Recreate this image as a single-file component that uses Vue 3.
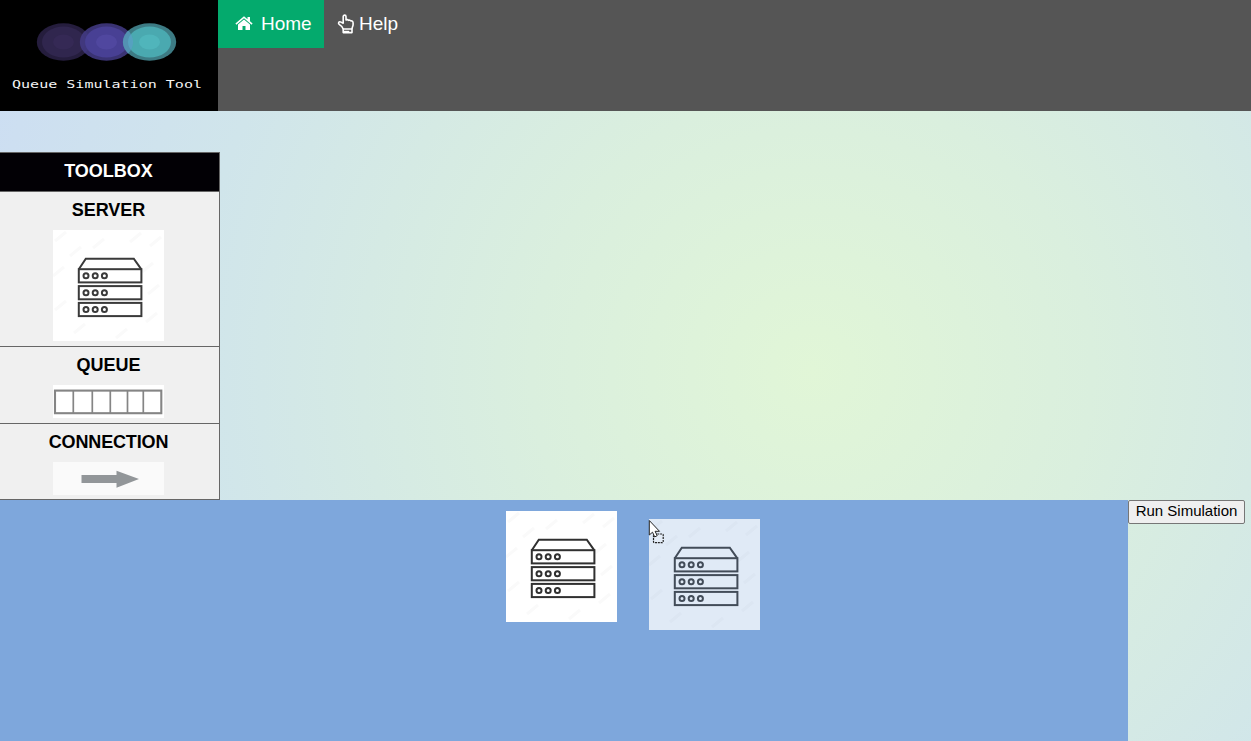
<script setup>
const units = [39.2, 56.1, 72.9]
const leds = [33, 42.2, 51.4]
const streaks = [
  [7, 7], [45, 14], [82, 8], [22, 22], [5, 42], [94, 38], [7, 76],
  [100, 60], [26, 99], [68, 104], [98, 88], [102, 12],
]
const servers = ['placed', 'ghost']
</script>

<template>
  <div class="page">
    <header class="topbar">
      <svg class="logo" viewBox="0 0 218 111" width="218" height="111">
        <rect width="218" height="111" fill="#000" />
        <g>
          <ellipse cx="63.5" cy="42" rx="26.7" ry="18.8" fill="#251d3d" />
          <ellipse cx="63.5" cy="42" rx="21.5" ry="15.5" fill="#30264e" />
          <ellipse cx="63.5" cy="42" rx="10.5" ry="7.5" fill="#352955" />
        </g>
        <g>
          <ellipse cx="106.5" cy="42" rx="26.7" ry="18.8" fill="#443c87" fill-opacity=".85" />
          <ellipse cx="106.5" cy="42" rx="21.5" ry="15.5" fill="#484094" />
          <ellipse cx="106.5" cy="42" rx="10.5" ry="7.5" fill="#50479f" />
        </g>
        <g>
          <ellipse cx="149.5" cy="42" rx="26.7" ry="18.8" fill="#42868f" fill-opacity=".92" />
          <ellipse cx="149.5" cy="42" rx="21.5" ry="15.5" fill="#4aa9b0" />
          <ellipse cx="149.5" cy="42" rx="10.5" ry="7.5" fill="#50b5bb" />
          <path d="M128.3 30.2 Q137.8 42 128.3 53.8 Q117.5 42 128.3 30.2Z" fill="#5f9ccb" fill-opacity=".6" />
        </g>
        <text class="logo-text" x="12" y="88" textLength="190" lengthAdjust="spacingAndGlyphs">Queue Simulation Tool</text>
      </svg>
      <nav class="nav">
        <a class="link active">
          <svg class="home" viewBox="0 0 18 16" width="18" height="16">
            <path d="M9 1.2 12.5 4.2V2H15V6.3l2.6 2.3-1 1.2L9 3.3 1.4 9.8l-1-1.2z" fill="#fff" />
            <path d="M9 4.4 15 9.5v5.5h-4.5v-4.1H7.5v4.1H3V9.5z" fill="#fff" />
          </svg>
          <span>Home</span>
        </a>
        <a class="link help">
          <svg viewBox="0 0 18 20" width="18" height="20" fill="none" stroke="#fff" stroke-width="1.6" stroke-linejoin="round">
            <path d="M6.2 15 C5.6 12.8 4 11.5 2.2 10.4 C.8 9.1 1.9 7.3 3.5 7.9 L6.2 9.2 V2.6 C6.2.6 9 .6 9 2.6 V6 C9.9 5.3 11 5.6 11.5 6.4 C12.4 5.9 13.5 6.1 13.9 6.9 C15.2 6.7 16.1 7.4 16.1 8.9 V10.4 C16.1 12.2 15 13.2 15 15" />
            <path d="M6.2 15H15V18.6H6.2Z" />
            <path d="M6.2 17.6H12.2" />
          </svg>
          <span>Help</span>
        </a>
      </nav>
    </header>

    <section class="toolbox">
      <div class="cell title">TOOLBOX</div>
      <div class="cell server-cell">
        <span>SERVER</span>
        <svg class="pic" viewBox="0 0 111 111" width="111" height="111">
          <rect width="111" height="111" fill="#fff" />
          <path v-for="s in streaks" :key="s.join()" :d="`M${s[0] - 5} ${s[1] + 4}l11 -9`" stroke="#fafafa" stroke-width="3" />
          <g fill="none" stroke="#3a3a3a" stroke-width="2">
            <path d="M25.8 39.2 32.8 28.7H80.8L88.2 39.2" />
            <g v-for="y in units" :key="y">
              <rect x="25.8" :y="y" width="62.6" height="13.2" />
              <circle v-for="x in leds" :key="x" :cx="x" :cy="y + 6.6" r="2.5" />
            </g>
          </g>
        </svg>
      </div>
      <div class="cell small-cell">
        <span>QUEUE</span>
        <svg class="pic" viewBox="0 0 111 33" width="111" height="33">
          <rect width="111" height="33" fill="#fff" />
          <g fill="none" stroke="#858585">
            <rect x="2" y="5.6" width="106.3" height="22.6" stroke-width="2.1" />
            <path d="M20.3 6V28M39.3 6V28M57.3 6V28M74.5 6V28M90.3 6V28" stroke-width="1.7" />
          </g>
        </svg>
      </div>
      <div class="cell small-cell">
        <span class="connection">CONNECTION</span>
        <svg class="pic" viewBox="0 0 111 33" width="111" height="33">
          <rect width="111" height="33" fill="#fafafa" />
          <path d="M28.5 13H63.5V8.7L86 17 63.5 25.7V21H28.5Z" fill="#929699" />
        </svg>
      </div>
    </section>

    <main class="bottom">
      <div class="canvas">
        <svg v-for="name in servers" :key="name" class="node" :class="name" viewBox="0 0 111 111" width="111" height="111">
          <rect width="111" height="111" fill="#fff" />
          <path v-for="s in streaks" :key="s.join()" :d="`M${s[0] - 5} ${s[1] + 4}l11 -9`" stroke="#fafafa" stroke-width="3" />
          <g fill="none" stroke="#303030" stroke-width="2">
            <path d="M25.8 39.2 32.8 28.7H80.8L88.2 39.2" />
            <g v-for="y in units" :key="y">
              <rect x="25.8" :y="y" width="62.6" height="13.2" />
              <circle v-for="x in leds" :key="x" :cx="x" :cy="y + 6.6" r="2.5" />
            </g>
          </g>
        </svg>
        <svg class="cursor" viewBox="0 0 18 26" width="18" height="26">
          <rect x="5.5" y="14" width="9.7" height="8.7" rx="1" fill="#e6edf7" fill-opacity=".7" stroke="#222" stroke-width="1.2" stroke-dasharray="2 .8" />
          <path d="M1.3 .5V15L4.5 12.2 6.7 16.9 9.2 15.7 7.1 11.3H11.5Z" fill="#fff" stroke="#222" stroke-width="1" />
        </svg>
      </div>
      <button class="run">Run Simulation</button>
    </main>
  </div>
</template>

<style>
body { margin: 0; overflow: hidden; }
</style>

<style scoped>
.page {
  width: 1251px;
  height: 741px;
  overflow: hidden;
  display: flex;
  flex-direction: column;
  font-family: "Liberation Sans", Arial, sans-serif;
  background: radial-gradient(circle at 812px 370px, #e1f6d7 0, #daefde 280px, #d5eae4 450px, #d0e5eb 620px, #cddff1 830px, #ccddf4 892px);
}
.topbar {
  height: 111px;
  flex: none;
  display: flex;
  align-items: flex-start;
  background: #555;
}
.logo { display: block; flex: none; }
.logo-text {
  font-family: "DejaVu Sans Mono", monospace;
  font-size: 11px;
  fill: #f4f4f4;
}
.nav { display: flex; }
.link {
  box-sizing: border-box;
  height: 48px;
  display: flex;
  align-items: center;
  color: #fff;
  font-size: 19px;
}
.active { width: 106px; padding-left: 17px; gap: 8px; background: #04aa6d; }
.help { padding-left: 13px; gap: 4px; }
.home { position: relative; top: -1px; }
.toolbox {
  box-sizing: border-box;
  width: 220px;
  height: 348px;
  flex: none;
  margin-top: 41px;
  border: 1px solid #666;
  border-left: 0;
  background: #f0f0f0;
  font-size: 18px;
  font-weight: bold;
}
.cell {
  box-sizing: border-box;
  display: flex;
  flex-direction: column;
  align-items: center;
  padding-right: 2px;
  line-height: 20px;
  padding-top: 8px;
  color: #000;
}
.cell + .cell { border-top: 1px solid #666; }
.title { height: 38px; background: #020005; color: #fff; }
.server-cell { height: 155px; }
.small-cell { height: 77px; }
.connection { letter-spacing: -.15px; }
.pic { display: block; margin-top: 10px; }
.bottom { flex: 1; display: flex; align-items: flex-start; }
.canvas {
  position: relative;
  width: 1128px;
  height: 241px;
  background: #7ea7dc;
}
.node { position: absolute; }
.placed { left: 506.4px; top: 11.4px; }
.ghost { left: 648.7px; top: 18.5px; opacity: .76; }
.cursor { position: absolute; left: 648px; top: 20px; }
.run {
  box-sizing: border-box;
  width: 117px;
  height: 24px;
  padding: 0 0 3px;
  border: 1px solid #767676;
  border-radius: 2px;
  background: #efefef;
  color: #000;
  font: 15px "Liberation Sans", Arial, sans-serif;
}
</style>
